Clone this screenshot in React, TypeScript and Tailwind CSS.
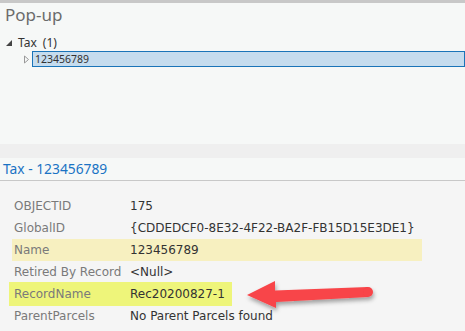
import React from "react";

const rows: { label: string; value: string; hl?: "name" | "rec" }[] = [
  { label: "OBJECTID", value: "175" },
  { label: "GlobalID", value: "{CDDEDCF0-8E32-4F22-BA2F-FB15D15E3DE1}" },
  { label: "Name", value: "123456789", hl: "name" },
  { label: "Retired By Record", value: "<Null>" },
  { label: "RecordName", value: "Rec20200827-1", hl: "rec" },
  { label: "ParentParcels", value: "No Parent Parcels found" },
];

function Arrow() {
  return (
    <svg className="absolute left-[240px] top-[276px]" width="150" height="42" viewBox="0 0 150 42">
      <defs>
        <filter id="sh" x="-20%" y="-40%" width="140%" height="180%">
          <feDropShadow dx="1" dy="3" stdDeviation="2" floodColor="#000" floodOpacity="0.35" />
        </filter>
      </defs>
      <g filter="url(#sh)">
        <path d="M7 19 L35 5 L35 14.5 L128 11 L128 21 L36 26 L36 32 Z" fill="#f84448" strokeLinejoin="round" />
        <circle cx="128" cy="16" r="5" fill="#f84448" />
      </g>
    </svg>
  );
}

export default function App() {
  return (
    <div className="relative w-[465px] h-[331px] overflow-hidden bg-[#f5f5f5]">
      <div className="h-[3px] bg-[#c8c8c8]" />
      <div className="h-[141px] bg-[#f6f8f7] font-['Noto_Sans',sans-serif]">
        <div className="pl-[5px] pt-[1px] text-[17px] leading-[22px] text-[#6b6b6b]">Pop-up</div>
        <div className="mt-[9px] flex items-center h-[16px] pl-[5px] text-[12px] text-[#333]">
          <svg width="8" height="8" viewBox="0 0 8 8" className="mr-[5px]">
            <path d="M7 1 L7 7 L1 7 Z" fill="#444" />
          </svg>
          <span>Tax</span>
          <span className="ml-[6px]">(1)</span>
        </div>
        <div className="flex items-center h-[16px]">
          <svg width="8" height="9" viewBox="0 0 8 9" className="ml-[23px] mr-[1px]">
            <path d="M1.5 1 L5.5 4.5 L1.5 8 Z" fill="none" stroke="#999" strokeWidth="1" />
          </svg>
          <div className="flex-1 h-[16px] border border-[#1a74b8] bg-[#c5dcee] pl-[2px] text-[10.5px] leading-[14px] text-[#333]">
            123456789
          </div>
        </div>
      </div>
      <div className="h-[14px] bg-[#efefef]" />
      <div className="h-[23px] bg-[#f6f8f7] border-b border-[#c8c8c8] pl-[3px] flex items-center font-['Noto_Sans',sans-serif] text-[13.8px] text-[#1a73c4]">
        Tax - 123456789
      </div>
      <div className="pt-[14px] font-['DejaVu_Sans',sans-serif] text-[12px]">
        {rows.map((r) => (
          <div
            key={r.label}
            className={
              "flex items-center h-[22px] " +
              (r.hl === "name"
                ? "bg-[#f7f0c0] ml-[12px] w-[410px] pl-[2px]"
                : r.hl === "rec"
                ? "bg-[#eef57a] ml-[9px] w-[223px] pl-[5px] h-[24px] -my-px"
                : "pl-[14px]")
            }
          >
            <span className="w-[116px] shrink-0 text-[#7a7a7a]">{r.label}</span>
            <span className="text-[#333] whitespace-nowrap">{r.value}</span>
          </div>
        ))}
      </div>
      <Arrow />
    </div>
  );
}
